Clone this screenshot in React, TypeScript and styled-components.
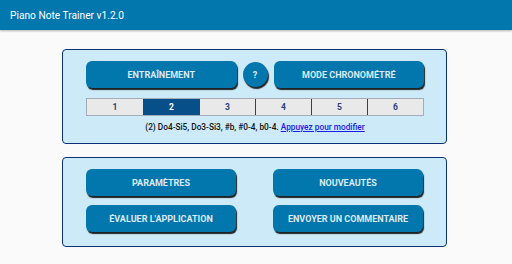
import styled, { createGlobalStyle } from "styled-components";

const GlobalStyle = createGlobalStyle`
    body {
        margin: 0;
        background: #fafafa;
        font-family: Roboto, "Liberation Sans", sans-serif;
    }
`

const levels = [1, 2, 3, 4, 5, 6];

export default function App() {
    return (
        <>
            <GlobalStyle />
            <Header>Piano Note Trainer v1.2.0</Header>
            <Main>
                <Panel>
                    <ButtonRow>
                        <Button>Entraînement</Button>
                        <HelpButton>?</HelpButton>
                        <Button>Mode chronométré</Button>
                    </ButtonRow>
                    <Tabs>
                        {levels.map((n) => (
                            <Tab key={n} $active={n === 2}>{n}</Tab>
                        ))}
                    </Tabs>
                    <Summary>
                        (2) Do4-Si5, Do3-Si3, #b, #0-4, b0-4. <EditLink href="#">Appuyez pour modifier</EditLink>
                    </Summary>
                </Panel>
                <MenuPanel>
                    <Button>Paramètres</Button>
                    <Button>Nouveautés</Button>
                    <Button>Évaluer l'application</Button>
                    <Button>Envoyer un commentaire</Button>
                </MenuPanel>
            </Main>
        </>
    );
}

const Header = styled.header`
    height: 30px;
    background: #0277ad;
    color: #ffffff;
    font-size: 10.2px;
    display: flex;
    align-items: center;
    padding-left: 10px;
    box-shadow: 0 1px 2px rgba(0, 0, 0, 0.3);
`

const Main = styled.main`
    padding: 19px 0 0 62px;
    display: flex;
    flex-direction: column;
    gap: 13px;
`

// панель с голубым фоном
const Panel = styled.section`
    box-sizing: border-box;
    width: 385px;
    height: 95px;
    background: #cdeaf8;
    border: 1.5px solid #0d2f74;
    border-radius: 4px;
    padding: 11px 22px 0 23px;
    display: flex;
    flex-direction: column;
`

const MenuPanel = styled(Panel)`
    height: 90px;
    padding: 11px 22px 12px 23px;
    display: grid;
    grid-template-columns: 150px 151px;
    justify-content: space-between;
    row-gap: 7px;
`

const ButtonRow = styled.div`
    display: flex;
    gap: 6px;
    align-items: center;
`

const Button = styled.button`
    width: 150px;
    height: 27px;
    flex: 1;
    border: none;
    border-radius: 6px;
    background: #0277ad;
    box-shadow: 1px 2px 1px rgba(0, 0, 0, 0.85);
    color: #dde9f1;
    font-family: Roboto, "Liberation Sans", sans-serif;
    font-weight: 700;
    font-size: 9px;
    text-transform: uppercase;
    padding: 0;
`

const HelpButton = styled(Button)`
    flex: none;
    width: 25px;
    height: 25px;
    border-radius: 50%;
`

const Tabs = styled.div`
    display: grid;
    grid-template-columns: repeat(6, 1fr);
    margin-top: 10px;
    height: 16px;
    border: 1px solid #a3acb8;
    background: #e9e9e9;
`

const Tab = styled.div<{ $active?: boolean }>`
    display: flex;
    align-items: center;
    justify-content: center;
    font-size: 8.5px;
    font-weight: 700;
    color: ${(p) => (p.$active ? "#ffffff" : "#2b3f78")};
    background: ${(p) => (p.$active ? "#064f88" : "transparent")};
    border-left: 1px solid #2b3f80;

    &:first-child {
        border-left: none;
    }
`

const Summary = styled.p`
    margin: 0;
    height: 24px;
    line-height: 23px;
    text-align: center;
    font-size: 8.3px;
    font-weight: 500;
    color: #111111;
`

const EditLink = styled.a`
    color: #1a1aee;
    text-decoration: underline;
`
